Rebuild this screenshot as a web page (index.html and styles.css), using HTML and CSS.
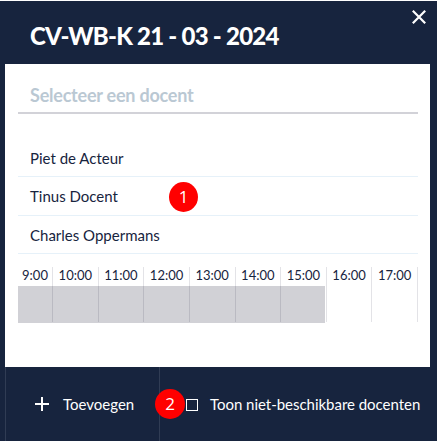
FILE: index.html
```html
<!DOCTYPE html>
<html lang="nl">
<head>
    <meta charset="UTF-8">
    <meta name="viewport" content="width=device-width, initial-scale=1.0">
    <title>Selecteer een docent</title>
    <link rel="stylesheet" href="styles.css">
</head>
<body>
    <div class="dialog">
        <header class="dialog-header">
            <h1>CV-WB-K 21 - 03 - 2024</h1>
            <button type="button" class="close" aria-label="Sluiten">
                <svg width="14" height="14" viewBox="0 0 14 14">
                    <path d="M0.8 0.8L13.2 13.2M13.2 0.8L0.8 13.2" stroke="#fff" stroke-width="2.2" fill="none"/>
                </svg>
            </button>
        </header>
        <main class="panel">
            <input type="text" class="search" placeholder="Selecteer een docent">
            <ul class="teachers">
                <li>Piet de Acteur</li>
                <li>Tinus Docent<span class="marker marker-one">1</span></li>
                <li>Charles Oppermans</li>
            </ul>
            <div class="timeline">
                <div class="hour"><span>9:00</span></div>
                <div class="hour"><span>10:00</span></div>
                <div class="hour"><span>11:00</span></div>
                <div class="hour"><span>12:00</span></div>
                <div class="hour"><span>13:00</span></div>
                <div class="hour"><span>14:00</span></div>
                <div class="hour"><span>15:00</span></div>
                <div class="hour"><span>16:00</span></div>
                <div class="hour"><span>17:00</span></div>
                <div class="busy"></div>
            </div>
        </main>
        <footer class="actions">
            <button type="button" class="action add">
                <svg width="14" height="14" viewBox="0 0 14 14">
                    <path d="M7 0V14M0 7H14" stroke="#fff" stroke-width="2" fill="none"/>
                </svg>
                <span>Toevoegen</span>
            </button>
            <button type="button" class="action toggle">
                <span class="marker marker-two">2</span>
                <span class="box"></span>
                <span>Toon niet-beschikbare docenten</span>
            </button>
        </footer>
    </div>
</body>
</html>
```
FILE: styles.css
```css
* {
    box-sizing: border-box;
}

body {
    margin: 0;
    font-family: Lato, sans-serif;
    font-size: 15px;
    color: #17243e;
    background-color: #fff;
}

button {
    padding: 0;
    border: none;
    background: none;
    font: inherit;
    color: #fff;
    cursor: pointer;
}

svg {
    display: block;
}

.dialog {
    display: flex;
    flex-direction: column;
    height: 440px;
    margin-top: 1px;
    padding: 0 7px 0 5px;
    background-color: #17243e;
}

.dialog-header {
    display: flex;
    justify-content: space-between;
    align-items: flex-start;
    height: 63px;
    padding-left: 25px;
}

h1 {
    margin: 20px 0 0;
    font-size: 24px;
    line-height: 29px;
    font-weight: 900;
    letter-spacing: -0.75px;
    color: #fff;
    white-space: nowrap;
}

.close {
    margin: 9px 4px 0 0;
}

.panel {
    height: 303px;
    padding: 15px 12px 0 13px;
    background-color: #fff;
}

.search {
    display: block;
    width: 100%;
    height: 35px;
    padding: 0 12px 2px;
    border: none;
    border-bottom: 2px solid #d2d2d8;
    outline: none;
    font-family: inherit;
    font-size: 18px;
    font-weight: 700;
    letter-spacing: -0.22px;
}

.search::placeholder {
    color: #bac8d3;
    opacity: 1;
}

.teachers {
    margin: 25px 0 0;
    padding: 0;
    list-style: none;
}

.teachers li {
    position: relative;
    height: 38px;
    padding: 0 12px;
    border-bottom: 1px solid #e6f1f9;
    line-height: 38px;
}

.teachers li:nth-child(2) {
    height: 39px;
}

.marker {
    position: absolute;
    width: 30px;
    height: 30px;
    border-radius: 50%;
    background-color: #f00;
    color: #fff;
    font-family: "Open Sans", sans-serif;
    font-size: 17px;
    line-height: 29px;
    text-align: center;
}

.marker-one {
    left: 151px;
    top: 5px;
    width: 29px;
}

.marker-two {
    left: -5px;
    top: 22px;
}

.timeline {
    position: relative;
    display: grid;
    grid-template-columns: 35px repeat(8, 1fr);
    height: 55px;
    margin-top: 13px;
}

.hour {
    border-right: 1px solid #e3e3e7;
    font-size: 13px;
    line-height: 17px;
    text-align: center;
}

/* occupied hours, drawn over the grid */
.busy {
    position: absolute;
    left: 0;
    top: 19px;
    width: 307px;
    height: 37px;
    background-color: rgba(27, 27, 48, 0.2);
}

.actions {
    display: flex;
    flex: 1;
}

.action {
    position: relative;
    display: flex;
    align-items: center;
    border-left: 1px solid #303c54;
    white-space: nowrap;
}

.add {
    width: 154px;
    gap: 14px;
    padding-left: 29px;
}

.toggle {
    flex: 1;
    gap: 12px;
    padding-left: 26px;
    letter-spacing: -0.03px;
}

.box {
    width: 12px;
    height: 12px;
    margin-top: 1px;
    border: 1px solid #fff;
}
```
